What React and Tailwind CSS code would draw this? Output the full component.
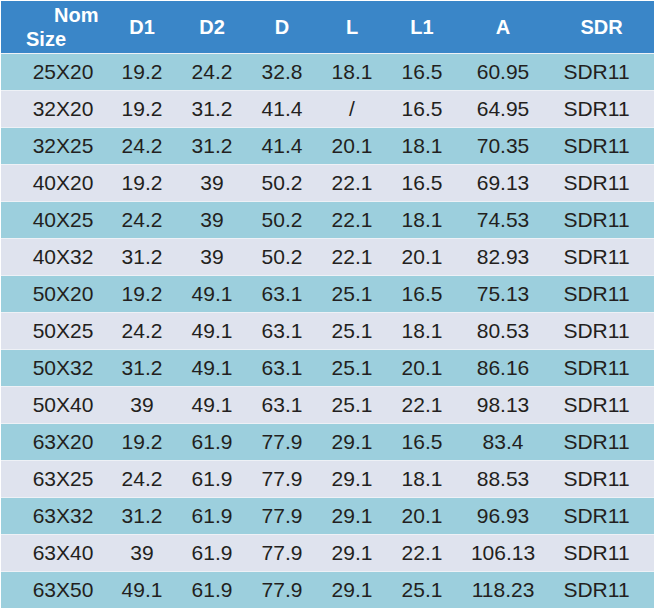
import React from 'react';

const rows = [
  ['25X20', '19.2', '24.2', '32.8', '18.1', '16.5', '60.95', 'SDR11'],
  ['32X20', '19.2', '31.2', '41.4', '/', '16.5', '64.95', 'SDR11'],
  ['32X25', '24.2', '31.2', '41.4', '20.1', '18.1', '70.35', 'SDR11'],
  ['40X20', '19.2', '39', '50.2', '22.1', '16.5', '69.13', 'SDR11'],
  ['40X25', '24.2', '39', '50.2', '22.1', '18.1', '74.53', 'SDR11'],
  ['40X32', '31.2', '39', '50.2', '22.1', '20.1', '82.93', 'SDR11'],
  ['50X20', '19.2', '49.1', '63.1', '25.1', '16.5', '75.13', 'SDR11'],
  ['50X25', '24.2', '49.1', '63.1', '25.1', '18.1', '80.53', 'SDR11'],
  ['50X32', '31.2', '49.1', '63.1', '25.1', '20.1', '86.16', 'SDR11'],
  ['50X40', '39', '49.1', '63.1', '25.1', '22.1', '98.13', 'SDR11'],
  ['63X20', '19.2', '61.9', '77.9', '29.1', '16.5', '83.4', 'SDR11'],
  ['63X25', '24.2', '61.9', '77.9', '29.1', '18.1', '88.53', 'SDR11'],
  ['63X32', '31.2', '61.9', '77.9', '29.1', '20.1', '96.93', 'SDR11'],
  ['63X40', '39', '61.9', '77.9', '29.1', '22.1', '106.13', 'SDR11'],
  ['63X50', '49.1', '61.9', '77.9', '29.1', '25.1', '118.23', 'SDR11'],
];

const headers = ['D1', 'D2', 'D', 'L', 'L1', 'A', 'SDR'];

// columnas: tamaño nominal + 7 medidas
const cols = 'grid grid-cols-[106px_70px_70px_70px_70px_70px_92px_105px]';

export default function App() {
  return (
    <div className="w-[655px] h-[609px] bg-white px-px pt-px font-['Liberation_Sans',Arial,sans-serif]">
      {/* Cabecera */}
      <div className={`${cols} h-[52px] bg-[#3a86c8] text-white font-bold text-[20px]`}>
        <div className="flex flex-col justify-center leading-[24px]">
          <span className="pl-[53px]">Nom</span>
          <span className="pl-[25px]">Size</span>
        </div>
        {headers.map((h) => (
          <div key={h} className="flex items-center justify-center">
            {h}
          </div>
        ))}
      </div>

      {/* Filas */}
      {rows.map((r, i) => (
        <div
          key={r[0]}
          className={`${cols} h-[37px] border-t border-[#eef1f6] text-[21px] text-[#231f20] ${
            i % 2 === 0 ? 'bg-[#9ccfdd]' : 'bg-[#dfe3ee]'
          }`}
        >
          {r.map((c, j) => (
            <div
              key={j}
              className={`flex items-center justify-center ${j === 0 ? 'pl-[18px]' : ''} ${j === 7 ? 'pr-[10px]' : ''}`}
            >
              {c}
            </div>
          ))}
        </div>
      ))}
    </div>
  );
}
